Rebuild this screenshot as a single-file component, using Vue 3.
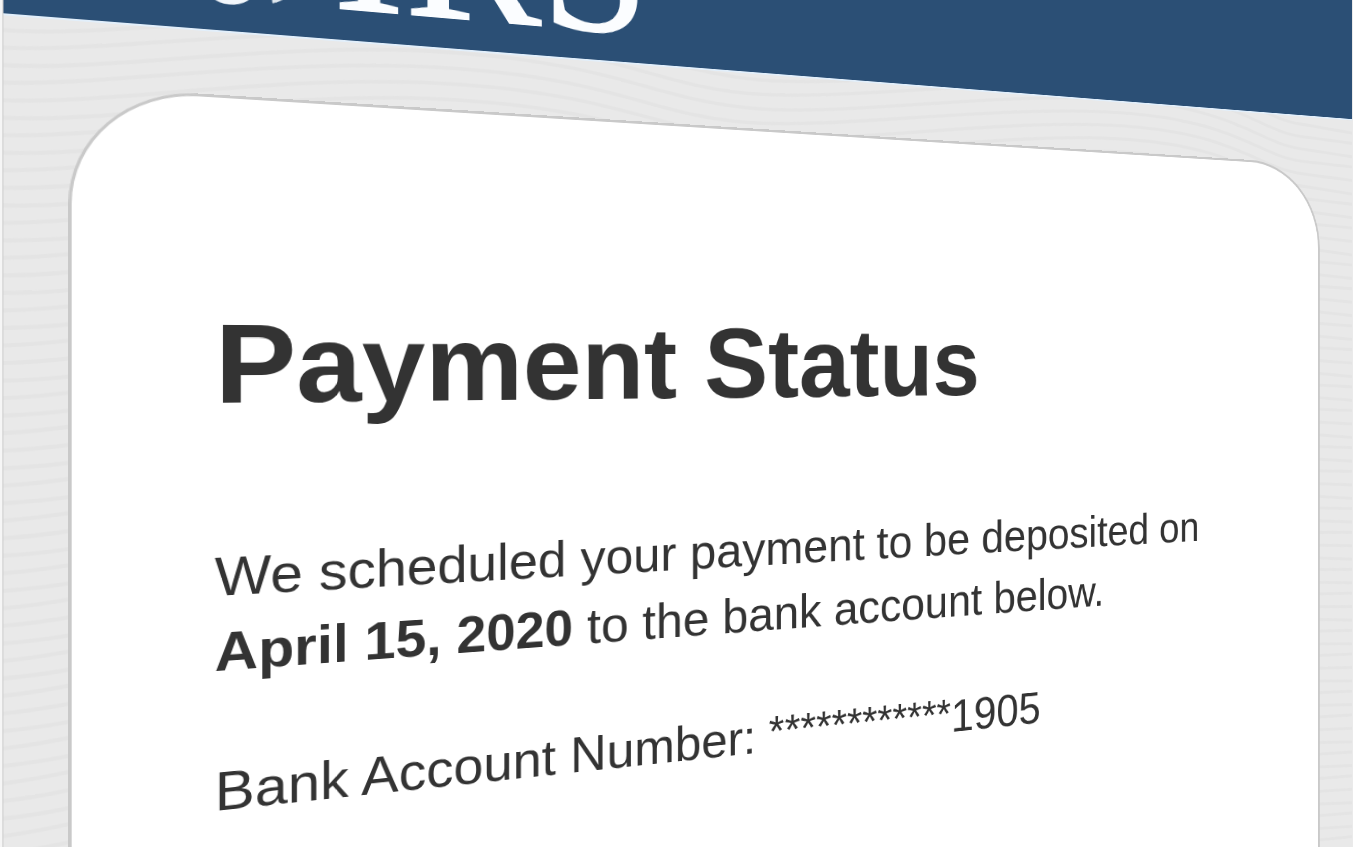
<script setup>
const maskedDigits = '*'.repeat(12)
const lastDigits = '1905'

const waves = Array.from({ length: 84 }, (_, i) => {
  const y = 150 + i * 17
  const j = (i * 7) % 5
  return `M0 ${y} C100 ${y - 4 + j} 260 ${y - 46} 440 ${y - 46} S660 ${y - 8 - j} 780 ${y - 8} S1120 ${y - 52} 1300 ${y - 52} S1520 ${y - 8} 1590 ${y - 4} T1690 ${y + j}`
})
</script>

<template>
  <div class="stage">
    <div class="plane">
      <div class="page">
        <svg class="waves" viewBox="0 0 1681 1300" preserveAspectRatio="none" aria-hidden="true">
          <path v-for="(d, i) in waves" :key="i" :d="d" />
        </svg>

        <header class="banner">
          <svg class="emblem" viewBox="0 0 150 160" aria-hidden="true">
            <path d="M10 152 Q28 164 48 153 L44 112 Q20 118 8 104 Z" opacity=".5" />
            <path d="M50 136 Q56 160 76 160 Q96 160 104 140 L108 96 Q78 84 46 102 Z" />
            <path d="M118 155 Q116 146 124 130 L146 120 Q140 148 118 155 Z" opacity=".9" />
          </svg>
          <span class="wordmark">IRS</span>
        </header>

        <main class="card">
          <h1>Payment Status</h1>
          <p>
            We scheduled your payment to be deposited on<br />
            <strong>April 15, 2020</strong> to the bank account below.
          </p>
          <p>Bank Account Number: <span class="mask">{{ maskedDigits }}</span>{{ lastDigits }}</p>
        </main>
      </div>
    </div>
  </div>
</template>

<style>
body {
  margin: 0;
  background: #f6f6f6;
}
</style>

<style scoped>
.stage {
  height: 100vh;
  overflow: hidden;
  perspective: 762px;
  perspective-origin: 50% 360px;
}

.plane {
  box-sizing: border-box;
  width: 124.5%;
  margin-top: -160px;
  padding-left: 2px;
  transform: rotateY(11.5deg);
  transform-origin: 0 520px;
}

.page {
  position: relative;
  border: solid #cfcfcf;
  border-width: 0 1px;
  background: #e9e9e9;
  color: #333;
  font-family: "Liberation Sans", Arial, sans-serif;
}

.waves {
  position: absolute;
  inset: 0;
  width: 100%;
  height: 100%;
  fill: none;
  stroke: #e4e4e4;
  stroke-width: 4;
}

.banner {
  position: relative;
  display: flex;
  align-items: flex-end;
  gap: 28px;
  height: 173px;
  padding-left: 130px;
  border-bottom: 2px solid #e2effb;
  background: #2b4f75;
}

.emblem {
  width: 150px;
  height: 160px;
  margin-bottom: 28px;
  fill: #f2f7fc;
}

.wordmark {
  color: #fbfdff;
  font-family: "Liberation Serif", "Times New Roman", serif;
  font-size: 222px;
  line-height: 218px;
  -webkit-text-stroke: 2px #fbfdff;
}

.card {
  position: relative;
  box-sizing: border-box;
  min-height: 1100px;
  margin: 66px 57px 0;
  padding: 220px 132px;
  border: 3px solid #c9c9c9;
  border-bottom: 0;
  border-radius: 120px 120px 0 0;
  background: #fff;
}

h1 {
  margin: 0 0 124px;
  font-size: 119px;
  line-height: 120px;
}

p {
  margin: 0 0 68px;
  font-size: 58px;
  line-height: 79px;
  white-space: nowrap;
}

.mask {
  font-size: 52px;
  line-height: 1;
  vertical-align: 6px;
}
</style>
